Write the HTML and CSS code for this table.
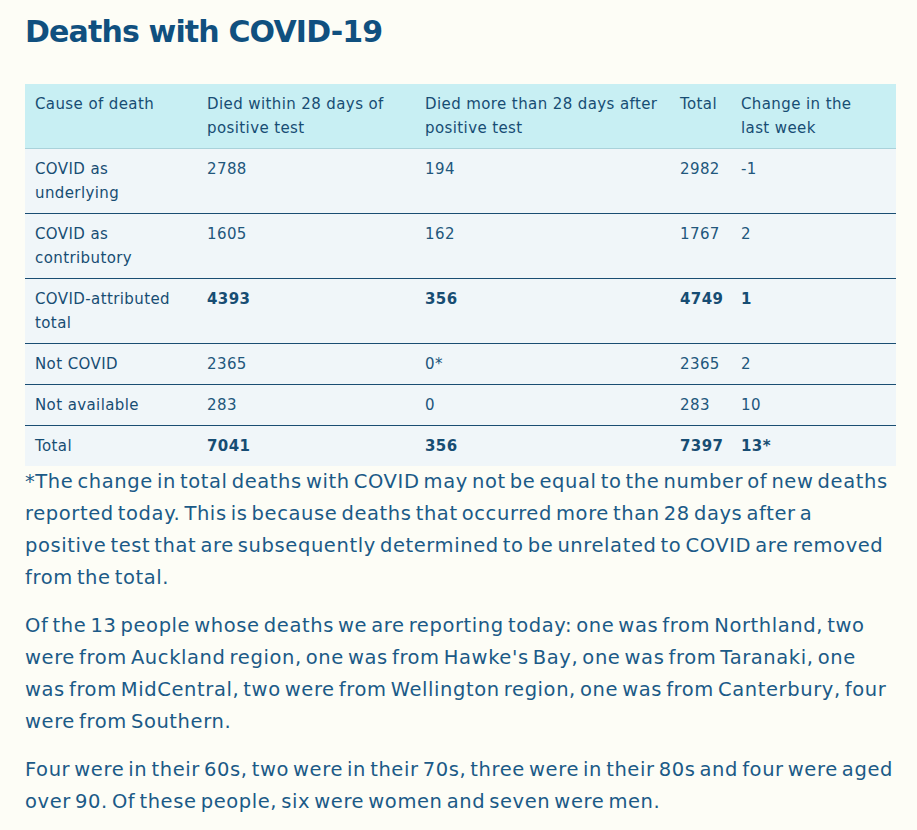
FILE: index.html
```html
<!DOCTYPE html>
<html lang="en">
<head>
<meta charset="utf-8">
<title>Deaths with COVID-19</title>
<link rel="stylesheet" href="styles.css">
</head>
<body>
<main class="content">
  <h2 class="title">Deaths with COVID-19</h2>
  <table class="deaths">
    <colgroup>
      <col class="c1"><col class="c2"><col class="c3"><col class="c4"><col class="c5">
    </colgroup>
    <thead>
      <tr>
        <th>Cause of death</th>
        <th>Died within 28 days of positive test</th>
        <th>Died more than 28 days after positive test</th>
        <th>Total</th>
        <th class="change">Change in the last week</th>
      </tr>
    </thead>
    <tbody>
      <tr><th>COVID as underlying</th><td>2788</td><td>194</td><td>2982</td><td>-1</td></tr>
      <tr><th>COVID as contributory</th><td>1605</td><td>162</td><td>1767</td><td>2</td></tr>
      <tr><th>COVID-attributed total</th><td><strong>4393</strong></td><td><strong>356</strong></td><td><strong>4749</strong></td><td><strong>1</strong></td></tr>
      <tr><th>Not COVID</th><td>2365</td><td>0*</td><td>2365</td><td>2</td></tr>
      <tr><th>Not available</th><td>283</td><td>0</td><td>283</td><td>10</td></tr>
      <tr class="last"><th>Total</th><td><strong>7041</strong></td><td><strong>356</strong></td><td><strong>7397</strong></td><td><strong>13*</strong></td></tr>
    </tbody>
  </table>
  <p>*The change in total deaths with COVID may not be equal to the number of new deaths reported today. This is because deaths that occurred more than 28 days after a positive test that are subsequently determined to be unrelated to COVID are removed from the total.</p>
  <p>Of the 13 people whose deaths we are reporting today: one was from Northland, two were from Auckland region, one was from Hawke's Bay, one was from Taranaki, one was from MidCentral, two were from Wellington region, one was from Canterbury, four were from Southern.</p>
  <p>Four were in their 60s, two were in their 70s, three were in their 80s and four were aged over 90. Of these people, six were women and seven were men.</p>
</main>
</body>
</html>
```

FILE: styles.css
```css
html, body {
  margin: 0;
  padding: 0;
  background: #fdfdf6;
}

body {
  font-family: "DejaVu Sans", "Noto Sans", sans-serif;
  color: #1b5682;
}

.content {
  width: 871px;
  padding: 0 0 0 25px;
}

.title {
  margin: 0;
  padding-top: 12px;
  font-size: 30px;
  line-height: 40px;
  font-weight: 700;
  color: #10507f;
  letter-spacing: -0.85px;
}

.deaths {
  margin-top: 32px;
  width: 871px;
  table-layout: fixed;
  border-collapse: collapse;
  font-size: 15px;
  line-height: 24px;
  color: #174d73;
  letter-spacing: 0.4px;
}

.c1 { width: 172px; }
.c2 { width: 218px; }
.c3 { width: 255px; }
.c4 { width: 61px; }
.c5 { width: 165px; }

.deaths th,
.deaths td {
  padding: 8px 10px;
  text-align: left;
  vertical-align: top;
}

.deaths thead th {
  background: #c8eff3;
  font-weight: 400;
  border-bottom: 1px solid #a9d2da;
}

.deaths thead th.change {
  padding-right: 20px;
}

.deaths tbody tr {
  background: #f0f6f9;
  border-bottom: 1px solid #1a4e72;
}

.deaths tbody tr.last {
  border-bottom: none;
}

.deaths tbody th {
  font-weight: 400;
}

.deaths td {
  font-weight: 400;
  color: #22577c;
}

.deaths strong {
  font-weight: 700;
  color: #174d73;
}

.content p {
  margin: 0 0 16px;
  font-size: 19.5px;
  line-height: 32px;
  letter-spacing: 0.6px;
  word-spacing: -2.7px;
  color: #1b5a87;
}
```
